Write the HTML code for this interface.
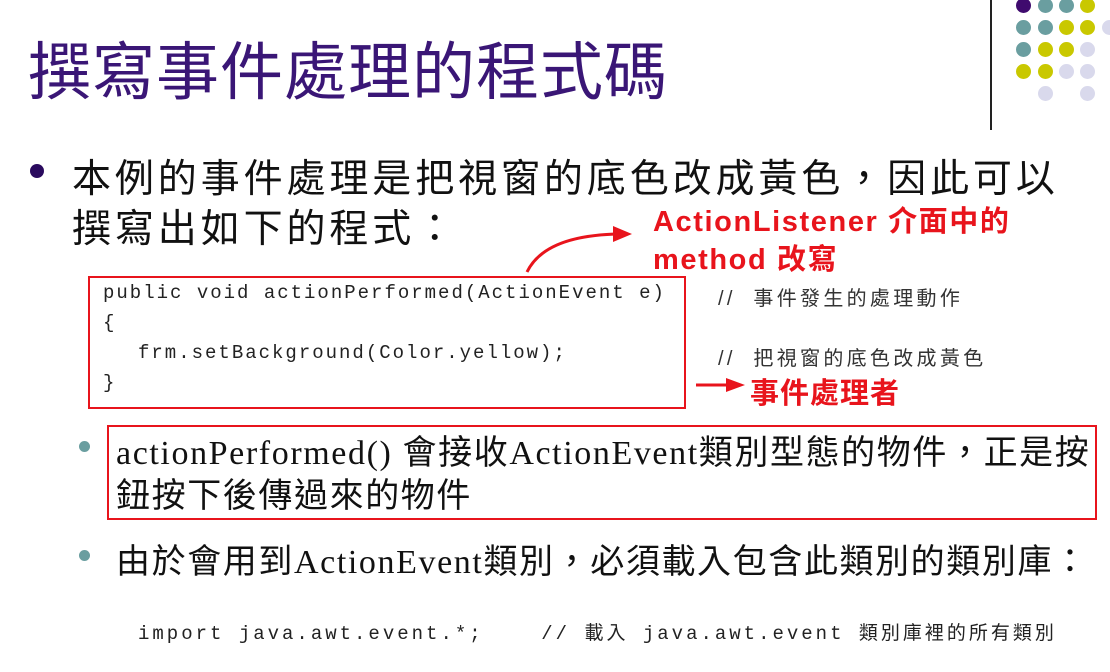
<!DOCTYPE html>
<html><head><meta charset="utf-8"><style>
body{margin:0;width:1110px;height:672px;background:#fff;position:relative;overflow:hidden;font-family:"Liberation Sans","Noto Sans CJK TC",sans-serif}
.a{position:absolute;white-space:pre}
.d{position:absolute;width:15px;height:15px;border-radius:50%}
.p{background:#3f0b6e}.t{background:#6a9ea0}.y{background:#c9c800}.l{background:#d9d9ec}
.m{font-family:"Liberation Mono","Noto Sans CJK TC",monospace;font-size:19px;color:#222;letter-spacing:2px}
.c{font-size:20px;color:#333;letter-spacing:3.3px}
.s{font-family:"Liberation Serif","Noto Sans CJK TC",serif;font-size:34px;color:#111}
.r{color:#e8141c;font-weight:bold;font-size:29px;letter-spacing:1.6px}
</style></head><body>
<div class="a" style="left:28px;top:22px;font-size:63px;color:#3a1676;letter-spacing:1px">撰寫事件處理的程式碼</div>
<div class="a" style="left:990px;top:0;width:2px;height:130px;background:#222"></div>
<div class="d p" style="left:1016px;top:-2px"></div><div class="d t" style="left:1038px;top:-2px"></div><div class="d t" style="left:1059px;top:-2px"></div><div class="d y" style="left:1080px;top:-2px"></div>
<div class="d t" style="left:1016px;top:20px"></div><div class="d t" style="left:1038px;top:20px"></div><div class="d y" style="left:1059px;top:20px"></div><div class="d y" style="left:1080px;top:20px"></div><div class="d l" style="left:1102px;top:20px"></div>
<div class="d t" style="left:1016px;top:42px"></div><div class="d y" style="left:1038px;top:42px"></div><div class="d y" style="left:1059px;top:42px"></div><div class="d l" style="left:1080px;top:42px"></div>
<div class="d y" style="left:1016px;top:64px"></div><div class="d y" style="left:1038px;top:64px"></div><div class="d l" style="left:1059px;top:64px"></div><div class="d l" style="left:1080px;top:64px"></div>
<div class="d l" style="left:1038px;top:86px"></div><div class="d l" style="left:1080px;top:86px"></div>
<div class="a" style="left:30px;top:164px;width:14px;height:14px;border-radius:50%;background:#2a0a5e"></div>
<div class="a" style="left:72px;top:148px;font-size:39px;color:#111;letter-spacing:3.9px">本例的事件處理是把視窗的底色改成黃色，因此可以</div>
<div class="a" style="left:72px;top:198px;font-size:39px;color:#111;letter-spacing:3.9px">撰寫出如下的程式：</div>
<div class="a r" style="left:653px;top:198px">ActionListener 介面中的</div>
<div class="a r" style="left:653px;top:236px">method 改寫</div>
<svg class="a" style="left:0;top:0" width="1110" height="672"><path d="M527 272 Q545 235 620 234" fill="none" stroke="#e8141c" stroke-width="3"/><path d="M613 226 L632 234 L613 242Z" fill="#e8141c"/><path d="M696 385 L728 385" stroke="#e8141c" stroke-width="3"/><path d="M726 378 L745 385 L726 392Z" fill="#e8141c"/></svg>
<div class="a" style="left:88px;top:276px;width:594px;height:129px;border:2px solid #e8141c"></div>
<div class="a m" style="left:103px;top:282px">public void actionPerformed(ActionEvent e)</div>
<div class="a m" style="left:103px;top:312px">{</div>
<div class="a m" style="left:138px;top:342px">frm.setBackground(Color.yellow);</div>
<div class="a m" style="left:103px;top:372px">}</div>
<div class="a c" style="left:718px;top:282px">//  事件發生的處理動作</div>
<div class="a c" style="left:718px;top:342px">//  把視窗的底色改成黃色</div>
<div class="a r" style="left:750px;top:370px;letter-spacing:1px">事件處理者</div>
<div class="a" style="left:79px;top:441px;width:11px;height:11px;border-radius:50%;background:#6a9ea0"></div>
<div class="a" style="left:107px;top:425px;width:986px;height:91px;border:2px solid #e8141c"></div>
<div class="a s" style="left:116px;top:425px;letter-spacing:1.6px">actionPerformed() 會接收ActionEvent類別型態的物件，正是按</div>
<div class="a s" style="left:116px;top:468px;letter-spacing:1.6px">鈕按下後傳過來的物件</div>
<div class="a" style="left:79px;top:550px;width:11px;height:11px;border-radius:50%;background:#6a9ea0"></div>
<div class="a s" style="left:116px;top:534px;letter-spacing:1.6px">由於會用到ActionEvent類別，必須載入包含此類別的類別庫：</div>
<div class="a m" style="left:138px;top:618px;letter-spacing:3px">import java.awt.event.*;    // 載入 java.awt.event 類別庫裡的所有類別</div>
</body></html>
